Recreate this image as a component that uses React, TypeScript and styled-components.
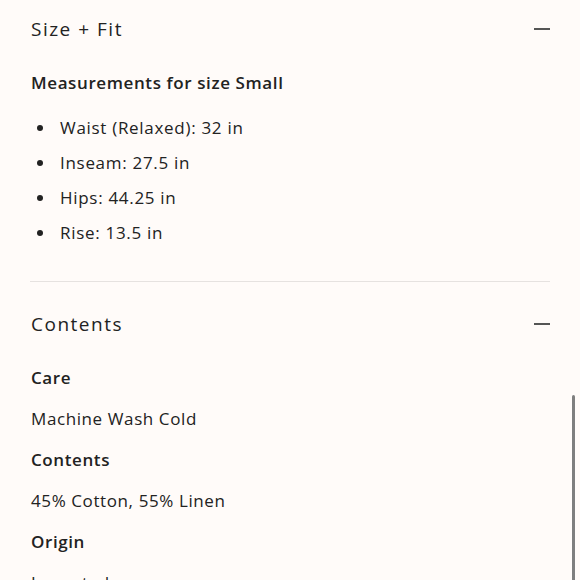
import React from "react";
import styled, { createGlobalStyle } from "styled-components";

const GlobalStyle = createGlobalStyle`
    html, body {
        margin: 0;
        padding: 0;
        background: #fffbf9;
        overflow: hidden;
    }
    body {
        font-family: "Open Sans", "Liberation Sans", sans-serif;
        color: #222222;
    }
`;

const Page = styled.div`
    position: relative;
    width: 580px;
    height: 580px;
    overflow: hidden;
    background: #fffbf9;
`;

const Column = styled.div`
    padding: 17px 30px 0 30px;
`;

const Section = styled.section<{ $last?: boolean }>`
    padding-bottom: ${props => (props.$last ? "0" : "36px")};
    border-bottom: ${props => (props.$last ? "none" : "1px solid #e6e2e0")};
    & + & {
        padding-top: 30px;
    }
`;

const SectionHeader = styled.div`
    display: flex;
    align-items: center;
    justify-content: space-between;
    height: 24px;
`;

const SectionTitle = styled.h2`
    margin: 0 0 0 1px;
    font-size: 19px;
    font-weight: 400;
    letter-spacing: 1.5px;
    line-height: 24px;
`;

const Minus = styled.span`
    display: block;
    width: 16px;
    height: 1.5px;
    background: #555555;
`;

const SubTitle = styled.h3<{ $gap: number }>`
    margin: ${props => props.$gap}px 0 0 1px;
    font-size: 17px;
    font-weight: 600;
    letter-spacing: 0.6px;
    line-height: 24px;
`;

const List = styled.ul`
    margin: 21px 0 0 0;
    padding: 0;
    list-style: none;
    display: flex;
    flex-direction: column;
    gap: 11px;
`;

const Item = styled.li`
    display: flex;
    align-items: center;
    font-size: 17px;
    letter-spacing: 0.7px;
    line-height: 24px;
    &::before {
        content: "";
        width: 6px;
        height: 6px;
        border-radius: 50%;
        background: #222222;
        margin: 0 17px 0 7px;
    }
`;

const Detail = styled.p`
    margin: 17px 0 0 1px;
    font-size: 17px;
    letter-spacing: 0.6px;
    line-height: 24px;
`;

const Scrollbar = styled.div`
    position: absolute;
    right: 5px;
    top: 395px;
    bottom: -10px;
    width: 3.5px;
    border-radius: 2px;
    background: #7f7f7f;
`;

const measurements = [
    "Waist (Relaxed): 32 in",
    "Inseam: 27.5 in",
    "Hips: 44.25 in",
    "Rise: 13.5 in",
];

const details = [
    { label: "Care", value: "Machine Wash Cold" },
    { label: "Contents", value: "45% Cotton, 55% Linen" },
    { label: "Origin", value: "Imported" },
];

export default function App() {
    return (
        <Page>
            <GlobalStyle />
            <Column>
                <Section>
                    <SectionHeader>
                        <SectionTitle>Size + Fit</SectionTitle>
                        <Minus />
                    </SectionHeader>
                    <SubTitle $gap={30}>Measurements for size Small</SubTitle>
                    <List>
                        {measurements.map(m => <Item key={m}>{m}</Item>)}
                    </List>
                </Section>
                <Section $last>
                    <SectionHeader>
                        <SectionTitle>Contents</SectionTitle>
                        <Minus />
                    </SectionHeader>
                    {details.map((d, i) => (
                        <React.Fragment key={d.label}>
                            <SubTitle $gap={i === 0 ? 30 : 17}>{d.label}</SubTitle>
                            <Detail>{d.value}</Detail>
                        </React.Fragment>
                    ))}
                </Section>
            </Column>
            <Scrollbar />
        </Page>
    );
}
